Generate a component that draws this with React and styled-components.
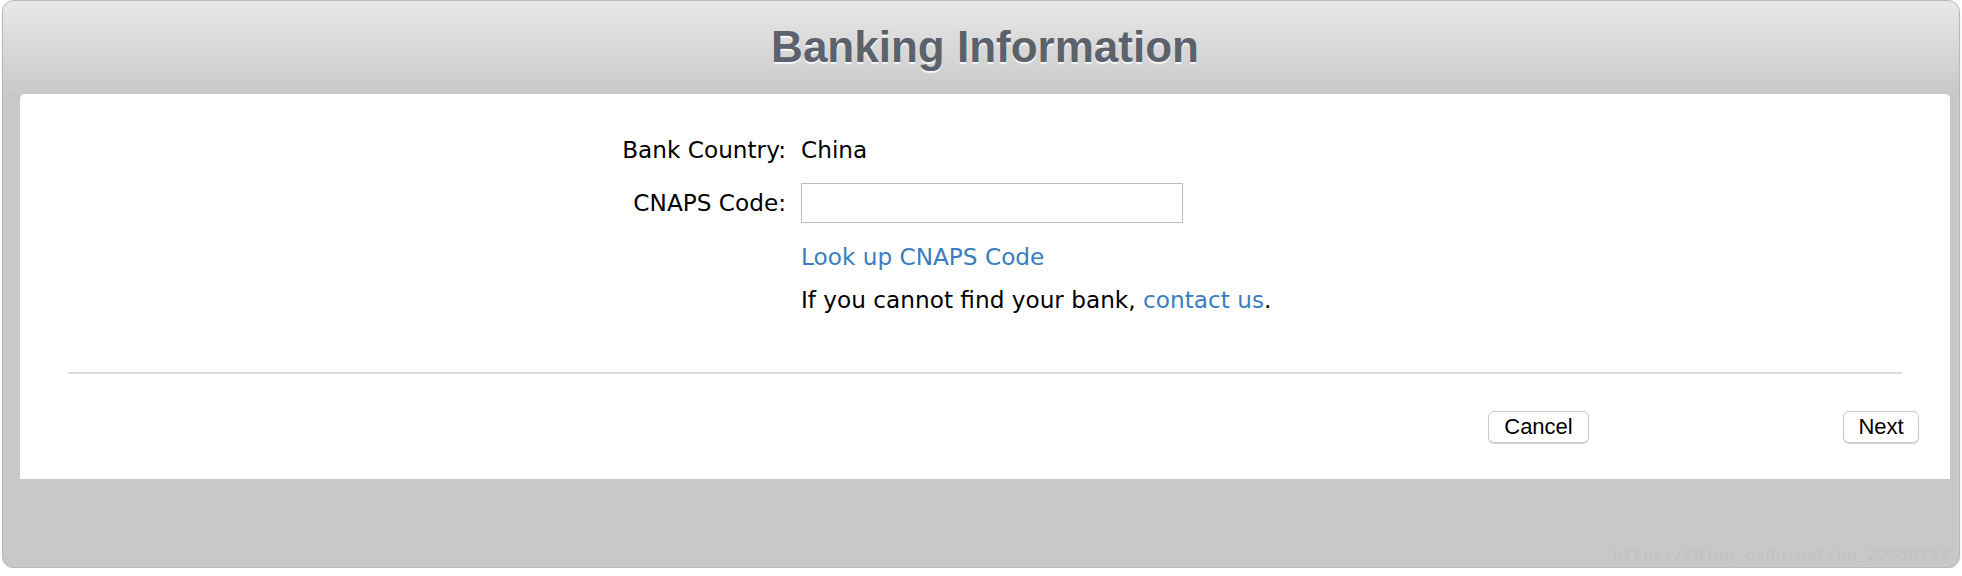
import React from 'react';
import styled, { createGlobalStyle } from 'styled-components';

const GlobalStyle = createGlobalStyle`
    html, body {
        margin: 0;
        padding: 0;
        background: #ffffff;
    }
`;

const Frame = styled.div`
    box-sizing: border-box;
    margin-left: 2px;
    width: 1958px;
    height: 568px;
    border: 1px solid #b8b8b8;
    border-radius: 12px;
    background: #c8c8c8;
    box-shadow: 0 1px 2px rgba(0, 0, 0, 0.12);
    display: flex;
    flex-direction: column;
    overflow: hidden;
`;

const Header = styled.div`
    height: 93px;
    flex-shrink: 0;
    background: linear-gradient(to bottom, #e8e8e8, #c9c9c9);
    display: flex;
    justify-content: center;
    align-items: flex-start;
`;

const Title = styled.h1`
    margin: 20px 0 0 8px;
    font-family: "Liberation Sans", Arial, sans-serif;
    font-size: 44px;
    font-weight: bold;
    line-height: 52px;
    color: #5b626b;
    text-shadow: 0 2px 1px rgba(255, 255, 255, 0.85);
`;

const Content = styled.div`
    height: 385px;
    flex-shrink: 0;
    margin: 0 9px 0 17px;
    background: #ffffff;
    border-radius: 5px 5px 0 0;
    display: flex;
    flex-direction: column;
`;

const FormGrid = styled.div`
    display: grid;
    grid-template-columns: 766px 1fr;
    column-gap: 15px;
    padding-top: 41px;
    font-family: "DejaVu Sans", Verdana, sans-serif;
    font-size: 23.2px;
    color: #000;
`;

const Label = styled.div`
    text-align: right;
    line-height: 30px;
    margin-top: ${props => props.top || 0}px;
    align-self: center;
`;

const Value = styled.div`
    line-height: 30px;
    margin-top: ${props => props.top || 0}px;
`;

const TextInput = styled.input`
    box-sizing: border-box;
    width: 382px;
    height: 40px;
    margin-top: ${props => props.top || 0}px;
    border: 1px solid #bdbdbd;
    border-radius: 0;
    padding: 0 8px;
    font: inherit;
    outline: none;
`;

const Link = styled.a`
    color: #3b7dc2;
    text-decoration: none;
`;

const Separator = styled.hr`
    margin: 57px 48px 0 48px;
    border: none;
    border-top: 2px solid #dcdcdc;
`;

const ButtonRow = styled.div`
    display: flex;
    justify-content: flex-end;
    gap: 254px;
    padding: 37px 31px 0 0;
`;

const Button = styled.button`
    box-sizing: border-box;
    height: 32px;
    width: ${props => props.w}px;
    padding: 0;
    background: #ffffff;
    border: 1px solid #cbcbcb;
    border-radius: 6px;
    box-shadow: 0 1px 1px rgba(0, 0, 0, 0.18);
    font-family: "Liberation Sans", Arial, sans-serif;
    font-size: 22px;
    color: #000;
`;

const Bottom = styled.div`
    flex: 1;
    display: flex;
    justify-content: flex-end;
    align-items: flex-end;
    padding: 0 10px 2px 0;
`;

const Watermark = styled.span`
    font-family: "Liberation Mono", "Courier New", monospace;
    font-size: 17px;
    color: #c1c1c1;
`;

export default function App() {
    return (
        <>
            <GlobalStyle />
            <Frame>
                <Header>
                    <Title>Banking Information</Title>
                </Header>
                <Content>
                    <FormGrid>
                        <Label>Bank Country:</Label>
                        <Value>China</Value>
                        <Label top={18}>CNAPS Code:</Label>
                        <div>
                            <TextInput top={18} />
                        </div>
                        <div />
                        <Value top={19}>
                            <Link href="#">Look up CNAPS Code</Link>
                        </Value>
                        <div />
                        <Value top={13}>
                            If you cannot find your bank, <Link href="#">contact us</Link>.
                        </Value>
                    </FormGrid>
                    <Separator />
                    <ButtonRow>
                        <Button w={101}>Cancel</Button>
                        <Button w={76}>Next</Button>
                    </ButtonRow>
                </Content>
                <Bottom>
                    <Watermark>https://blog.csdn.net/qq_22080737</Watermark>
                </Bottom>
            </Frame>
        </>
    );
}
